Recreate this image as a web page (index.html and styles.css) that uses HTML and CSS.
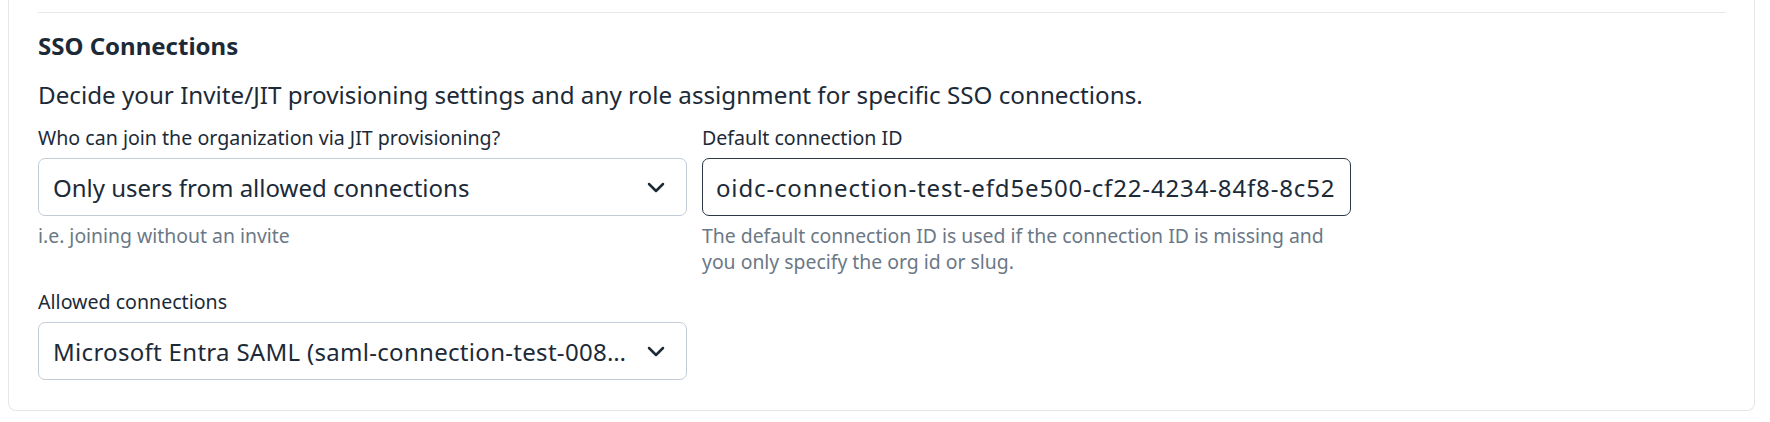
FILE: index.html
```html
<!DOCTYPE html>
<html lang="en">
<head>
<meta charset="utf-8">
<title>SSO Connections</title>
<link rel="stylesheet" href="styles.css">
</head>
<body>
<div class="card">
  <section class="section">
    <h2 class="heading">SSO Connections</h2>
    <p class="desc">Decide your Invite/JIT provisioning settings and any role assignment for specific SSO connections.</p>
    <div class="grid">
      <div class="field">
        <label class="label">Who can join the organization via JIT provisioning?</label>
        <div class="select">
          <span class="select-text">Only users from allowed connections</span>
          <svg class="chevron" width="18" height="11" viewBox="0 0 18 11" aria-hidden="true"><path d="M2 2 L9 9 L16 2" fill="none" stroke="#1c2a38" stroke-width="2.5" stroke-linecap="round" stroke-linejoin="round"/></svg>
        </div>
        <p class="help">i.e. joining without an invite</p>
      </div>
      <div class="field">
        <label class="label">Default connection ID</label>
        <input class="input" type="text" value="oidc-connection-test-efd5e500-cf22-4234-84f8-8c52">
        <p class="help help-wide">The default connection ID is used if the connection ID is missing and you only specify the org id or slug.</p>
      </div>
      <div class="field">
        <label class="label">Allowed connections</label>
        <div class="select">
          <span class="select-text select-text-long">Microsoft Entra SAML (saml-connection-test-008…</span>
          <svg class="chevron" width="18" height="11" viewBox="0 0 18 11" aria-hidden="true"><path d="M2 2 L9 9 L16 2" fill="none" stroke="#1c2a38" stroke-width="2.5" stroke-linecap="round" stroke-linejoin="round"/></svg>
        </div>
      </div>
    </div>
  </section>
</div>
</body>
</html>
```

FILE: styles.css
```css
html, body {
  margin: 0;
  padding: 0;
  background: #ffffff;
}
body {
  font-family: "Noto Sans", "Liberation Sans", sans-serif;
  color: #1c2a38;
}
.card {
  margin: 0 15px 0 8px;
  border: 1px solid #e4e7eb;
  border-top: 0;
  border-radius: 0 0 8px 8px;
  padding: 12px 28px 30px 29px;
}
.section {
  border-top: 1px solid #e4e7eb;
  padding-top: 19px;
}
.heading {
  margin: 0;
  font-size: 24px;
  line-height: 28px;
  font-weight: 700;
}
.desc {
  margin: 19px 0 0;
  font-size: 24.2px;
  line-height: 32px;
}
.grid {
  display: grid;
  grid-template-columns: 649px 649px;
  column-gap: 15px;
  row-gap: 14px;
  margin-top: 14px;
}
.field {
  display: flex;
  flex-direction: column;
}
.label {
  font-size: 19.6px;
  line-height: 26px;
  margin-bottom: 7px;
}
.select {
  box-sizing: border-box;
  height: 58px;
  border: 1px solid #c3ccd6;
  border-radius: 7px;
  display: flex;
  align-items: center;
  gap: 14px;
  padding: 0 21px 0 14px;
}
.select-text {
  flex: 1;
  min-width: 0;
  font-size: 24px;
  white-space: nowrap;
  overflow: hidden;
  text-overflow: ellipsis;
}
.select-text-long {
  letter-spacing: 0.3px;
}
.chevron {
  flex: none;
}
.input {
  box-sizing: border-box;
  height: 58px;
  width: 100%;
  border: 1.5px solid #2c3846;
  border-radius: 7px;
  padding: 0 4px 0 13px;
  font-family: inherit;
  font-size: 24px;
  letter-spacing: 0.85px;
  color: #1c2a38;
  background: #fff;
  outline: none;
}
.help {
  margin: 7px 0 0;
  font-size: 19.4px;
  line-height: 26px;
  color: #6b7886;
}
.help-wide {
  padding-right: 8px;
}
```
